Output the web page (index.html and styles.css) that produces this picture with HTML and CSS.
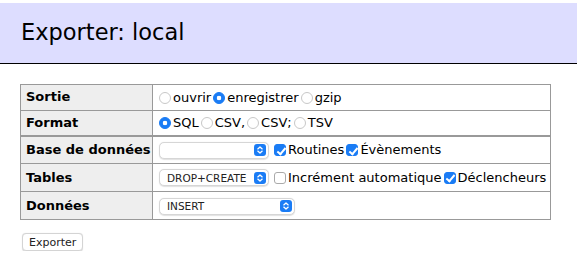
FILE: index.html
```html
<!DOCTYPE html>
<html lang="fr">
<head>
    <meta charset="UTF-8">
    <title>Exporter: local</title>
    <link rel="stylesheet" href="styles.css">
</head>
<body>
    <h2 class="page-title">Exporter: local</h2>

    <form class="export-form">
        <table class="export-table">
            <colgroup>
                <col class="col-label">
                <col>
            </colgroup>
            <tr>
                <th>Sortie</th>
                <td><label><input type="radio" name="output">ouvrir</label><label><input type="radio" name="output" checked>enregistrer</label><label><input type="radio" name="output">gzip</label></td>
            </tr>
            <tr>
                <th>Format</th>
                <td><label><input type="radio" name="format" checked>SQL</label><label><input type="radio" name="format">CSV,</label><label><input type="radio" name="format">CSV;</label><label><input type="radio" name="format">TSV</label></td>
            </tr>
            <tr class="tall first-db">
                <th>Base de données</th>
                <td><span class="sel sel-db"><select><option></option></select><svg class="sel-icon" width="12" height="12" viewBox="0 0 12 12"><rect width="12" height="12" rx="3" fill="#1a7cf5"/><path d="M3.8 4.9 6 2.9 8.2 4.9M3.8 7.1 6 9.1 8.2 7.1" fill="none" stroke="#fff" stroke-width="1.3" stroke-linecap="round" stroke-linejoin="round"/></svg></span><label><input type="checkbox" checked>Routines</label><label><input type="checkbox" checked>Évènements</label></td>
            </tr>
            <tr class="tall">
                <th>Tables</th>
                <td><span class="sel sel-db"><select><option>DROP+CREATE</option></select><svg class="sel-icon" width="12" height="12" viewBox="0 0 12 12"><rect width="12" height="12" rx="3" fill="#1a7cf5"/><path d="M3.8 4.9 6 2.9 8.2 4.9M3.8 7.1 6 9.1 8.2 7.1" fill="none" stroke="#fff" stroke-width="1.3" stroke-linecap="round" stroke-linejoin="round"/></svg></span><label><input type="checkbox">Incrément automatique</label><label><input type="checkbox" checked>Déclencheurs</label></td>
            </tr>
            <tr class="tall">
                <th>Données</th>
                <td><span class="sel sel-data"><select><option>INSERT</option></select><svg class="sel-icon" width="12" height="12" viewBox="0 0 12 12"><rect width="12" height="12" rx="3" fill="#1a7cf5"/><path d="M3.8 4.9 6 2.9 8.2 4.9M3.8 7.1 6 9.1 8.2 7.1" fill="none" stroke="#fff" stroke-width="1.3" stroke-linecap="round" stroke-linejoin="round"/></svg></span></td>
            </tr>
        </table>
        <p class="actions"><button type="button" class="btn">Exporter</button></p>
    </form>
</body>
</html>
```

FILE: styles.css
```css
*{
    margin: 0;
    padding: 0;
}
body{
    font: 13px/1.25 "DejaVu Sans", Verdana, sans-serif;
    color: #000;
    background: #fff;
}
.page-title{
    margin-top: 3px;
    padding: 16px 21px 17px;
    background: #ddf;
    border-bottom: 1px solid #000;
    font-size: 22.5px;
    font-weight: normal;
    line-height: 27px;
}
.export-form{
    padding-left: 20px;
}
.export-table{
    margin-top: 20px;
    width: 531px;
    table-layout: fixed;
    border-collapse: collapse;
    border: 1px solid #999;
}
.col-label{
    width: 132px;
}
.export-table th,
.export-table td{
    border: 1px solid #999;
    padding: 2px 4px 2px 4px;
    height: 20px;
    line-height: 20px;
    white-space: nowrap;
    text-align: left;
}
.export-table th{
    padding-left: 5px;
    background: #eee;
    font-weight: bold;
}
.export-table tr.tall th,
.export-table tr.tall td{
    height: 23px;
}
.export-table tr.first-db th,
.export-table tr.first-db td{
    border-top-width: 2px;
    height: 22px;
}
.export-table label{
    display: inline-flex;
    align-items: center;
    vertical-align: middle;
}
.export-table input{
    appearance: none;
    -webkit-appearance: none;
    width: 12px;
    height: 12px;
    margin: 0 2px 0 2px;
    background: #fff;
    border: 1px solid #c8c8c8;
    position: relative;
    flex: none;
}
.export-table input[type=radio]{
    border-radius: 50%;
}
.export-table input[type=radio]:checked{
    border-color: #1a7cf5;
    background: radial-gradient(circle, #fff 0, #fff 2px, #1a7cf5 2.6px);
}
.export-table input[type=checkbox]{
    border-radius: 3px;
    border-color: #aaa;
}
.export-table input[type=checkbox]:checked{
    background: #1a7cf5;
    border-color: #1a7cf5;
}
.export-table input[type=checkbox]:checked::after{
    content: "";
    position: absolute;
    left: 3.5px;
    top: 0.5px;
    width: 3px;
    height: 7px;
    border-right: 2px solid #fff;
    border-bottom: 2px solid #fff;
    transform: rotate(40deg);
}
.sel{
    display: inline-block;
    position: relative;
    vertical-align: middle;
    margin: 0 3px 0 2px;
}
.sel select{
    appearance: none;
    -webkit-appearance: none;
    display: block;
    height: 17px;
    padding: 0 18px 0 7px;
    border: 1px solid #d6d6d6;
    border-radius: 5px;
    background: #fff;
    box-shadow: 0 0.5px 1px rgba(0,0,0,0.12);
    font: 10.5px "DejaVu Sans", Verdana, sans-serif;
    color: #222;
}
.sel-db select{
    width: 110px;
}
.sel-data select{
    width: 136px;
}
.sel-icon{
    position: absolute;
    right: 3px;
    top: 2.5px;
}
.actions{
    margin-top: 13px;
    padding-left: 2px;
}
.btn{
    height: 18px;
    padding: 0 6px;
    background: #fff;
    border: 1px solid #d4d4d4;
    border-radius: 4px;
    box-shadow: 0 0.5px 1px rgba(0,0,0,0.15);
    font: 11px "DejaVu Sans", Verdana, sans-serif;
    color: #222;
}
```
